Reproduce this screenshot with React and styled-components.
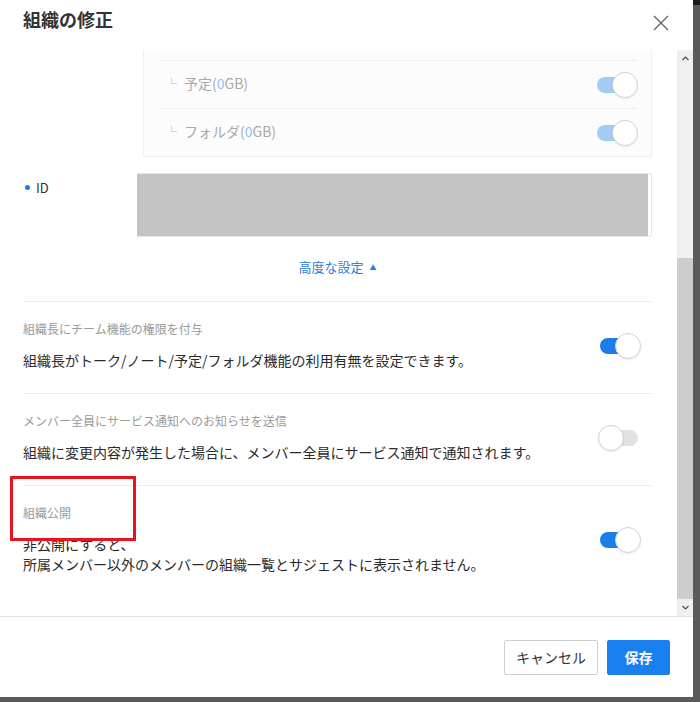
import React, { useLayoutEffect, useRef } from 'react'
import styled, { createGlobalStyle } from 'styled-components'

const GlobalStyle = createGlobalStyle`
  html, body {
    margin: 0;
    padding: 0;
    background: linear-gradient(#1c1c1c 0, #1c1c1c 5px, #5a5a5a 5px);
    font-family: "Noto Sans CJK JP", "Noto Sans", sans-serif;
    -webkit-font-smoothing: antialiased;
  }
  #root {
    width: 700px;
    height: 702px;
  }
`

const BLUE = '#1a7ee8'

const storageRows = [
  { name: '予定', size: 0 },
  { name: 'フォルダ', size: 0 },
]

const options = [
  {
    label: '組織長にチーム機能の権限を付与',
    desc: ['組織長がトーク/ノート/予定/フォルダ機能の利用有無を設定できます。'],
    on: true,
  },
  {
    label: 'メンバー全員にサービス通知へのお知らせを送信',
    desc: ['組織に変更内容が発生した場合に、メンバー全員にサービス通知で通知されます。'],
    on: false,
  },
  {
    label: '組織公開',
    desc: ['非公開にすると、', '所属メンバー以外のメンバーの組織一覧とサジェストに表示されません。'],
    on: true,
    marked: true,
  },
]

function Toggle({ on, faded }) {
  return (
    <Switch>
      <Track $on={on} $faded={faded} />
      <Knob $on={on} />
    </Switch>
  )
}

function App() {
  const bodyRef = useRef(null)

  // the list is scrolled a little, so the top edge of the box sits under the header
  useLayoutEffect(() => {
    if (bodyRef.current) bodyRef.current.scrollTop = 2
  }, [])

  return (
    <>
      <GlobalStyle />
      <Modal>
        <Header>
          <Title>組織の修正</Title>
          <Close aria-label="close">
            <svg width="16" height="16" viewBox="0 0 16 16">
              <path d="M1 1L15 15M15 1L1 15" stroke="#666" strokeWidth="1.4" fill="none" />
            </svg>
          </Close>
        </Header>

        <Middle>
          <ScrollBody ref={bodyRef}>
            <Content>
              <StorageBox>
                {storageRows.map((r) => (
                  <StorageRow key={r.name}>
                    <StorageName>
                      <Corner>└</Corner>
                      {r.name}(<Num>{r.size}</Num>GB)
                    </StorageName>
                    <Toggle on faded />
                  </StorageRow>
                ))}
              </StorageBox>

              <FieldRow>
                <FieldLabel>
                  <Dot />
                  ID
                </FieldLabel>
                <FieldBox>
                  <Redacted />
                </FieldBox>
              </FieldRow>

              <Advanced>
                高度な設定
                <Caret>▲</Caret>
              </Advanced>

              {options.map((o) => (
                <Option key={o.label}>
                  <OptionText>
                    <OptionLabel>{o.label}</OptionLabel>
                    <OptionDesc>
                      {o.desc.map((line) => (
                        <div key={line}>{line}</div>
                      ))}
                    </OptionDesc>
                  </OptionText>
                  <Toggle on={o.on} />
                  {o.marked && <Marker />}
                </Option>
              ))}
            </Content>
          </ScrollBody>

          <Scrollbar>
            <ScrollButton>
              <svg width="7" height="5" viewBox="0 0 7 5">
                <path d="M0.5 4L3.5 1L6.5 4" stroke="#505050" strokeWidth="1.2" fill="none" />
              </svg>
            </ScrollButton>
            <ScrollTrack>
              <Thumb style={{ marginTop: 191, height: 341 }} />
            </ScrollTrack>
            <ScrollButton>
              <svg width="7" height="5" viewBox="0 0 7 5">
                <path d="M0.5 1L3.5 4L6.5 1" stroke="#505050" strokeWidth="1.2" fill="none" />
              </svg>
            </ScrollButton>
          </Scrollbar>
        </Middle>

        <Footer>
          <CancelButton>キャンセル</CancelButton>
          <SaveButton>保存</SaveButton>
        </Footer>
      </Modal>
    </>
  )
}

export default App

const Modal = styled.div`
  width: 693px;
  height: 697px;
  background: #fff;
  display: flex;
  flex-direction: column;
`

const Header = styled.div`
  height: 50px;
  flex: none;
  display: flex;
  justify-content: space-between;
  align-items: flex-start;
  padding: 0 24px 0 23px;
  box-sizing: border-box;
`

const Title = styled.h1`
  margin: 8px 0 0;
  font-size: 18px;
  line-height: 22px;
  font-weight: bold;
  color: #333;
`

const Close = styled.button`
  margin-top: 15px;
  padding: 0;
  border: 0;
  background: none;
  width: 16px;
  height: 16px;
  display: flex;
`

const Middle = styled.div`
  flex: 1;
  min-height: 0;
  display: flex;
  border-bottom: 1px solid #e4e4e4;
`

const ScrollBody = styled.div`
  flex: 1;
  overflow: hidden;
`

const Content = styled.div`
  padding: 0 25px 20px 23px;
`

const StorageBox = styled.div`
  margin-left: 120px;
  background: #fcfcfc;
  border: 1px solid #f0f0f0;
  border-radius: 2px;
  padding: 11px 14px 0;
`

const StorageRow = styled.div`
  height: 47px;
  display: flex;
  align-items: center;
  justify-content: space-between;
  border-top: 1px solid #efefef;
`

const StorageName = styled.div`
  font-size: 14px;
  line-height: 20px;
  margin-top: -3px;
  color: #a9a9a9;
  padding-left: 8px;
  display: flex;
  align-items: center;
`

const Corner = styled.span`
  font-size: 11px;
  color: #b5b5b5;
  width: 18px;
`

const Num = styled.span`
  color: #8fc2f5;
`

const FieldRow = styled.div`
  display: flex;
  margin-top: 16px;
`

const FieldLabel = styled.div`
  width: 114px;
  flex: none;
  display: flex;
  align-items: center;
  gap: 6px;
  padding: 4px 0 0 2px;
  box-sizing: border-box;
  height: 24px;
  font-size: 13px;
  color: #333;
`

const Dot = styled.span`
  width: 5px;
  height: 5px;
  border-radius: 50%;
  background: ${BLUE};
`

const FieldBox = styled.div`
  flex: 1;
  height: 64px;
  border: 1px solid #e6e6e6;
  border-left: 0;
  border-radius: 0 2px 2px 0;
  display: flex;
  box-sizing: border-box;
`

const Redacted = styled.div`
  flex: 1;
  margin-right: 3px;
  background: #c4c4c4;
`

const Advanced = styled.div`
  padding: 20px 0 24px;
  text-align: center;
  font-size: 13px;
  line-height: 20px;
  color: #2a80e4;
`

const Caret = styled.span`
  font-size: 7px;
  margin-left: 6px;
  vertical-align: 2px;
`

const Option = styled.div`
  position: relative;
  border-top: 1px solid #ececec;
  padding: 20px 12px 23px 0;
  display: flex;
  align-items: center;
  justify-content: space-between;
`

const OptionText = styled.div`
  display: flex;
  flex-direction: column;
  gap: 14px;
`

const OptionLabel = styled.div`
  font-size: 12px;
  line-height: 14px;
  color: #9a9a9a;
`

const OptionDesc = styled.div`
  font-size: 14px;
  line-height: 20px;
  color: #2b2b2b;
`

const Marker = styled.div`
  position: absolute;
  left: -13px;
  top: -10px;
  width: 126px;
  height: 65px;
  border: 3px solid #e8141c;
  box-sizing: border-box;
  pointer-events: none;
`

const Switch = styled.div`
  position: relative;
  width: 42px;
  height: 26px;
  flex: none;
  display: flex;
  align-items: center;
`

const Track = styled.div`
  margin: 0 2px;
  flex: 1;
  height: 16px;
  border-radius: 8px;
  background: ${(p) => (p.$on ? (p.$faded ? '#a3cbf6' : BLUE) : '#e2e2e2')};
`

const Knob = styled.div`
  position: absolute;
  top: 0;
  ${(p) => (p.$on ? 'right: -1px;' : 'left: 0;')}
  width: 26px;
  height: 26px;
  border-radius: 50%;
  background: #fff;
  border: 1px solid #d4d4d4;
  box-sizing: border-box;
  box-shadow: 0 1px 2px rgba(0, 0, 0, 0.08);
`

const Scrollbar = styled.div`
  width: 16px;
  flex: none;
  display: flex;
  flex-direction: column;
  background: #f0f0f0;
`

const ScrollButton = styled.div`
  height: 17px;
  flex: none;
  display: flex;
  align-items: center;
  justify-content: center;
`

const ScrollTrack = styled.div`
  flex: 1;
  display: flex;
  flex-direction: column;
`

const Thumb = styled.div`
  background: #cdcdcd;
`

const Footer = styled.div`
  flex: none;
  height: 80px;
  display: flex;
  align-items: center;
  justify-content: flex-end;
  gap: 9px;
  padding: 0 23px 0 0;
`

const Button = styled.button`
  height: 35px;
  border-radius: 2px;
  font-family: inherit;
  font-size: 14px;
  padding: 0;
  cursor: pointer;
`

const CancelButton = styled(Button)`
  width: 94px;
  background: #fff;
  border: 1px solid #cfcfcf;
  color: #333;
`

const SaveButton = styled(Button)`
  width: 63px;
  background: #1a80f0;
  border: 1px solid #1a80f0;
  color: #fff;
  font-weight: bold;
`
